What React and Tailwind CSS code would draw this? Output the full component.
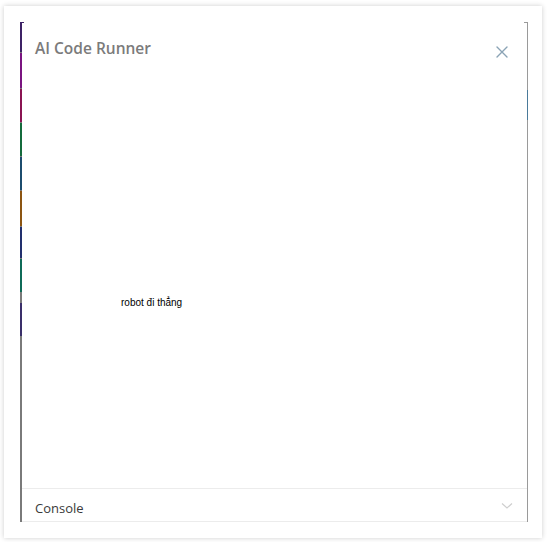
import React from "react";

const segs = [
  { h: 30, c: "bg-[#3d2266]" },
  { h: 35, c: "bg-[#7a1480]" },
  { h: 33, c: "bg-[#8a1452]" },
  { h: 33, c: "bg-[#146b3c]" },
  { h: 33, c: "bg-[#1c4c6e]" },
  { h: 35, c: "bg-[#8c5512]" },
  { h: 31, c: "bg-[#22306e]" },
  { h: 33, c: "bg-[#0f6b58]" },
  { h: 9, c: "bg-[#7a7a7a]" },
  { h: 33, c: "bg-[#3a2f6a]" },
];

export default function App() {
  return (
    <div className="w-[552px] h-[542px] bg-white pl-[4px] pt-[6px]" style={{ fontFamily: '"Open Sans", "Noto Sans", sans-serif' }}>
      <div className="w-[538px] h-[532px] bg-white shadow-[0_0_5px_rgba(0,0,0,0.2)] pl-[16px] pt-[16px] pr-[14px] pb-[16px]">
        <div className="relative flex h-full">
          {/* left colored border */}
          <div className="flex flex-col w-[2px] bg-[#7a7a7a]">
            {segs.map((s, i) => (
              <div key={i} className={`${s.c} mb-[1px]`} style={{ height: s.h }} />
            ))}
          </div>
          <div className="absolute left-0 top-0 w-[4px] h-[1px] bg-[#3d2266]" />
          <div className="flex-1 flex flex-col">
            <div className="flex items-start justify-between pl-[13px] pr-[18px] pt-[16px] h-[36px]">
              <div className="text-[15.5px] leading-[20px] font-semibold text-[#7b7b7b]">AI Code Runner</div>
              <svg width="14" height="14" viewBox="0 0 14 14" className="mt-[7px]">
                <path d="M2 2 L12 12 M12 2 L2 12" stroke="#8aa3b5" strokeWidth="1.4" strokeLinecap="round" />
              </svg>
            </div>
            <div className="flex-1 relative">
              <div className="pl-[99px] pt-[239px] text-[10px] leading-[12px] text-black" style={{ fontFamily: '"Liberation Sans", Arial, sans-serif' }}>
                robot đi thẳng
              </div>
            </div>
            <div className="h-[34px] border-t border-b border-[#ececec] flex items-center justify-between pl-[13px] pr-[14px]">
              <div className="text-[13px] leading-[18px] text-[#3a3a3a] mt-[6px]">Console</div>
              <svg width="12" height="8" viewBox="0 0 12 8" className="mt-[1px]">
                <path d="M1 1.5 L6 6 L11 1.5" stroke="#cfcfcf" strokeWidth="1.2" fill="none" />
              </svg>
            </div>
          </div>
          {/* right border */}
          <div className="relative w-[1px] bg-[#9a9a9a] flex flex-col">
            <div className="h-[68px]" />
            <div className="h-[30px] bg-[#4a7a9a]" />
          </div>
          <div className="absolute right-0 top-0 w-[4px] h-[1px] bg-[#9a9a9a]" />
        </div>
      </div>
    </div>
  );
}
